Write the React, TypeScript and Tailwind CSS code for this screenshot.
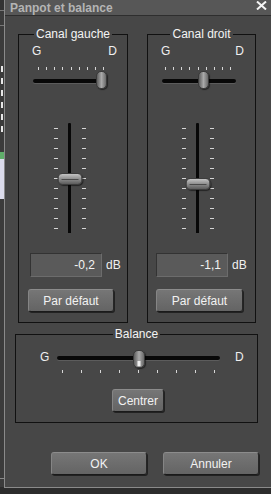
import React from "react";

const BG = "bg-[#474747]";

function HTicks({ n, className = "" }: { n: number; className?: string }) {
  return (
    <div className={`flex justify-between ${className}`}>
      {Array.from({ length: n }).map((_, i) => (
        <div key={i} className="w-px h-[3px] bg-[#d6d6d6]" />
      ))}
    </div>
  );
}

function VTicks({ n }: { n: number }) {
  return (
    <div className="flex flex-col gap-[9px] pt-[5px] w-[4px]">
      {Array.from({ length: n }).map((_, i) => (
        <div key={i} className="w-[4px] h-px bg-[#d6d6d6]" />
      ))}
    </div>
  );
}

function VThumb({ className = "" }: { className?: string }) {
  return (
    <div
      className={`absolute w-[11px] h-[18px] rounded-[5px] bg-linear-to-r from-[#5f5f5f] via-[#a9a9a9] to-[#6a6a6a] border border-[#3a3a3a] shadow-[1px_1px_1px_rgba(0,0,0,0.5)] ${className}`}
    />
  );
}

function Button({ label, className = "" }: { label: string; className?: string }) {
  return (
    <div
      className={`flex items-center justify-center rounded-[3px] bg-linear-to-b from-[#767676] to-[#646464] border border-t-[#8c8c8c] border-l-[#858585] border-r-[#262626] border-b-[#1a1a1a] text-[12px] leading-[14px] text-[#f2f2f2] shadow-[1px_1px_0_#222] ${className}`}
    >
      {label}
    </div>
  );
}

type ChannelProps = {
  title: string;
  width: string;
  gdPr: string;
  hTrackW: string;
  hTickPad: string;
  hThumbLeft: string;
  vMl: string;
  vThumbTop: string;
  value: string;
  inputMl: string;
  btnW: string;
  btnMl: string;
};

function Channel(p: ChannelProps) {
  return (
    <div className={`relative border border-[#111111] h-[289px] ${p.width}`}>
      <div className="absolute -top-[8px] left-0 right-0 flex justify-center">
        <span className={`${BG} px-[2px] text-[12px] leading-[14px] text-[#f4f4f4]`}>{p.title}</span>
      </div>
      <div className={`pt-[9px] pl-[13px] ${p.gdPr} flex justify-between text-[12px] leading-[14px] text-[#f0f0f0]`}>
        <span>G</span>
        <span>D</span>
      </div>
      {/* horizontal pan slider */}
      <div className={`relative mt-[9px] ml-[14px] h-[23px] ${p.hTrackW}`}>
        <HTicks n={9} className={p.hTickPad} />
        <div className="mt-[9px] h-[4px] rounded-full bg-[#080808] shadow-[0_1px_0_#5c5c5c]" />
        <VThumb className={`top-[4px] ${p.hThumbLeft}`} />
      </div>
      {/* vertical fader */}
      <div className={`mt-[33px] flex h-[110px] ${p.vMl}`}>
        <VTicks n={11} />
        <div className="relative ml-[10px] w-[3px] h-full bg-[#080808] rounded-t-[1px]">
          <div
            className={`absolute left-1/2 -translate-x-1/2 w-[25px] h-[12px] rounded-[5px] bg-linear-to-b from-[#c4c4c4] via-[#8e8e8e] to-[#5c5c5c] border border-[#3c3c3c] shadow-[1px_1px_1px_rgba(0,0,0,0.5)] ${p.vThumbTop}`}
          >
            <div className="absolute left-[3px] right-[3px] top-[5px] h-px bg-[#4a4a4a]" />
          </div>
        </div>
        <div className="ml-[11px]">
          <VTicks n={11} />
        </div>
      </div>
      {/* value */}
      <div className={`mt-[20px] flex items-center ${p.inputMl}`}>
        <div className="w-[72px] h-[24px] bg-[#5a5a5a] border border-t-[#333333] border-l-[#333333] border-r-[#6c6c6c] border-b-[#6c6c6c] flex items-center justify-end pr-[6px] text-[12px] leading-[14px] text-[#f4f4f4]">
          {p.value}
        </div>
        <span className="ml-[4px] text-[12px] leading-[14px] text-[#f0f0f0]">dB</span>
      </div>
      <Button label="Par défaut" className={`mt-[12px] h-[23px] ${p.btnW} ${p.btnMl}`} />
    </div>
  );
}

export default function App() {
  return (
    <div className="w-[271px] h-[494px] overflow-hidden flex bg-[#2c2c2c] font-['Liberation_Sans',Arial,sans-serif] select-none">
      {/* window behind */}
      <div className="w-[4px] h-[487px] bg-[#3b3b3b] flex flex-col">
        <div className="h-[10px] bg-[#333]" />
        <div className="h-px bg-[#777]" />
        <div className="h-[14px]" />
        <div className="h-px bg-[#777]" />
        <div className="h-[40px]" />
        <div className="flex flex-col gap-[6px] pl-[1px]">
          <div className="w-[2px] h-[6px] bg-[#e8e8e8]" />
          <div className="w-[2px] h-[6px] bg-[#e8e8e8]" />
          <div className="w-[2px] h-[6px] bg-[#e8e8e8]" />
          <div className="w-[2px] h-[6px] bg-[#e8e8e8]" />
          <div className="w-[2px] h-[6px] bg-[#e8e8e8]" />
          <div className="w-[2px] h-[6px] bg-[#e8e8e8]" />
        </div>
        <div className="h-[20px]" />
        <div className="h-[7px] bg-[#5fae6a]" />
        <div className="h-[40px] bg-[#dcdcec]" />
        <div className="flex-1" />
        <div className="h-px bg-[#888]" />
        <div className="h-[8px]" />
      </div>

      {/* dialog */}
      <div className={`flex-1 h-[488px] ${BG} border-l border-b border-[#8a8a8a] flex flex-col`}>
        <div className="h-[15px] bg-[#575757] flex items-center justify-between pl-[5px] pr-[4px]">
          <span className="text-[12px] leading-[14px] font-bold text-[#b4b4b4]">Panpot et balance</span>
          <svg width="11" height="9" viewBox="0 0 11 9" className="mb-[4px]">
            <path d="M1 0.5 L10 8.5 M10 0.5 L1 8.5" stroke="#f4f4f4" strokeWidth="2" />
          </svg>
        </div>
        <div className="h-px bg-[#2e2e2e]" />

        <div className="mt-[18px] ml-[13px] flex gap-[19px]">
          <Channel
            title="Canal gauche"
            width="w-[110px]"
            gdPr="pr-[10px]"
            hTrackW="w-[73px]"
            hTickPad="pl-[5px] pr-[2px]"
            hThumbLeft="left-[63px]"
            vMl="ml-[35px]"
            vThumbTop="top-[50px]"
            value="-0,2"
            inputMl="ml-[11px]"
            btnW="w-[86px]"
            btnMl="ml-[9px]"
          />
          <Channel
            title="Canal droit"
            width="w-[109px]"
            gdPr="pr-[11px]"
            hTrackW="w-[74px]"
            hTickPad="pl-[3px] pr-[5px]"
            hThumbLeft="left-[36px]"
            vMl="ml-[34px]"
            vThumbTop="top-[55px]"
            value="-1,1"
            inputMl="ml-[8px]"
            btnW="w-[87px]"
            btnMl="ml-[8px]"
          />
        </div>

        {/* Balance */}
        <div className="relative mt-[11px] ml-[10px] w-[243px] h-[89px] border border-[#111111]">
          <div className="absolute -top-[8px] left-0 right-0 flex justify-center">
            <span className={`${BG} px-[2px] text-[12px] leading-[14px] text-[#f4f4f4]`}>Balance</span>
          </div>
          <div className="pt-[15px] pl-[24px] flex items-start text-[12px] leading-[14px] text-[#f0f0f0]">
            <span className="w-[17px]">G</span>
            <div className="relative w-[163px] h-[23px]">
              <div className="mt-[6px] h-[4px] rounded-full bg-[#080808] shadow-[0_1px_0_#5c5c5c]" />
              <HTicks n={9} className="mt-[10px] px-[5px]" />
              <div className="absolute top-0 left-[76px] w-[12px] h-[18px] rounded-[5px] bg-linear-to-r from-[#5f5f5f] via-[#a9a9a9] to-[#6a6a6a] border border-[#3a3a3a] shadow-[1px_1px_1px_rgba(0,0,0,0.5)]">
                <div className="absolute left-1/2 -translate-x-1/2 bottom-[1px] w-[3px] h-[5px] bg-[#f0f0f0]" />
              </div>
            </div>
            <span className="ml-[15px]">D</span>
          </div>
          <Button label="Centrer" className="mt-[16px] ml-[96px] w-[52px] h-[23px]" />
        </div>

        <div className="mt-[29px] ml-[46px] flex gap-[16px]">
          <Button label="OK" className="w-[96px] h-[23px]" />
          <Button label="Annuler" className="w-[96px] h-[23px]" />
        </div>
      </div>
    </div>
  );
}
